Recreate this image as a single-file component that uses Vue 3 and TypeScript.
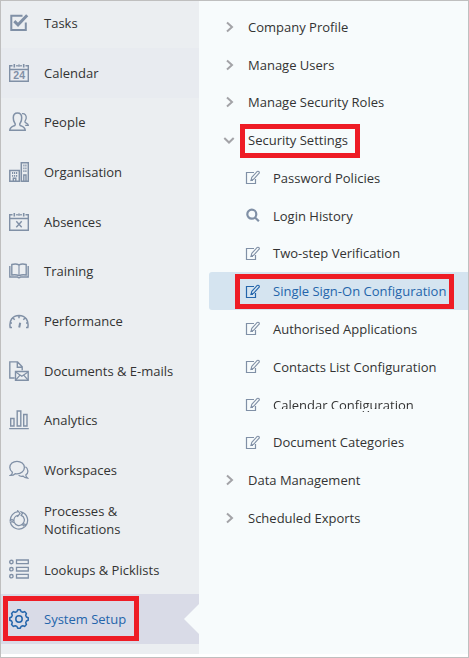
<script setup lang="ts">
type Side = { label: string; icon: string; state?: 'hover' | 'active' }
type Entry = { label: string; kind: 'closed' | 'open' | 'edit' | 'search'; mark?: boolean; active?: boolean; clipped?: boolean }

const sidebar: Side[] = [
  { label: 'Tasks', icon: 'tasks' },
  { label: 'Calendar', icon: 'calendar', state: 'hover' },
  { label: 'People', icon: 'people' },
  { label: 'Organisation', icon: 'org' },
  { label: 'Absences', icon: 'absences' },
  { label: 'Training', icon: 'training' },
  { label: 'Performance', icon: 'gauge' },
  { label: 'Documents & E-mails', icon: 'docs' },
  { label: 'Analytics', icon: 'bars' },
  { label: 'Workspaces', icon: 'chat' },
  { label: 'Processes & Notifications', icon: 'process' },
  { label: 'Lookups & Picklists', icon: 'list' },
  { label: 'System Setup', icon: 'gear', state: 'active' },
]

const entries: Entry[] = [
  { label: 'Company Profile', kind: 'closed' },
  { label: 'Manage Users', kind: 'closed' },
  { label: 'Manage Security Roles', kind: 'closed' },
  { label: 'Security Settings', kind: 'open', mark: true },
  { label: 'Password Policies', kind: 'edit' },
  { label: 'Login History', kind: 'search' },
  { label: 'Two-step Verification', kind: 'edit' },
  { label: 'Single Sign-On Configuration', kind: 'edit', active: true, mark: true },
  { label: 'Authorised Applications', kind: 'edit' },
  { label: 'Contacts List Configuration', kind: 'edit' },
  { label: 'Calendar Configuration', kind: 'edit', clipped: true },
  { label: 'Document Categories', kind: 'edit' },
  { label: 'Data Management', kind: 'closed' },
  { label: 'Scheduled Exports', kind: 'closed' },
]

const isChild = (e: Entry) => e.kind === 'edit' || e.kind === 'search'

// Cog outline with eight rounded teeth
const cog = (() => {
  const pts: string[] = []
  for (let i = 0; i < 8; i++) {
    const a = (i * Math.PI) / 4 - Math.PI / 2
    const ring: [number, number][] = [[-0.27, 7.7], [-0.14, 9.3], [0.14, 9.3], [0.27, 7.7]]
    for (const [d, r] of ring) pts.push(`${(10 + r * Math.cos(a + d)).toFixed(2)} ${(10 + r * Math.sin(a + d)).toFixed(2)}`)
  }
  return `M${pts.join('L')}Z`
})()
</script>

<template>
  <div class="frame">
    <nav class="sidebar">
      <a v-for="s in sidebar" :key="s.label" class="side" :class="[s.state, s.icon]">
        <svg class="side-icon" viewBox="0 0 20 20">
          <g v-if="s.icon === 'tasks'">
            <path d="M13.5 2.8H2.3V17H16.8V9.5" stroke-width="2" />
            <path d="M5.3 8.2L9 11.8L18.2 2.3" stroke-width="3" />
          </g>
          <g v-else-if="s.icon === 'calendar'">
            <path d="M3.5 2.7H.7V18.3H19.3V2.7H16.5M7.2 2.7H8.8M11.2 2.7H12.8M.7 6.5H19.3" />
            <path d="M5.3 1V4.5M14.7 1V4.5M10 1.5V3.7" stroke-width="1.6" />
            <text x="10.3" y="16.2">24</text>
          </g>
          <g v-else-if="s.icon === 'people'">
            <path d="M.8 18.3C.8 15.2 3 14.7 5.7 13.5C6.5 13 6.4 11.8 5.6 10.8C4.5 9.4 4.3 7.5 4.3 5.8C4.3 2.8 6 1 8.5 1S12.7 2.8 12.7 5.8C12.7 7.5 12.5 9.4 11.4 10.8C10.6 11.8 10.5 13 11.3 13.5C14 14.7 16.2 15.2 16.2 18.3Z" stroke-width="1.5" />
            <path d="M13 1.7C16.2 1.3 17.5 3.5 17.2 6.2C17 8 15.6 9 16 10.2C16.6 11.1 19.3 11.5 19.3 13.3H16.2" stroke-width="1.3" />
          </g>
          <g v-else-if="s.icon === 'org'">
            <path d="M.8 8.5H10.3V19.2H.8ZM12.3.7H19.3V19.2H12.3Z" stroke-width="1.5" />
            <path d="M3 11H8.3M3 13.8H8.3M14.3 3.5H17.6M14.3 6.3H17.6M14.3 9.1H17.6" stroke-width="1.8" stroke-dasharray="1.2 .8" />
            <path d="M4.3 19V16.3H6.8V19M14.8 19V13H17V19" />
          </g>
          <g v-else-if="s.icon === 'absences'">
            <path d="M3.5 2.7H.7V18.3H19.3V2.7H16.5M7.2 2.7H8.8M11.2 2.7H12.8M.7 6.5H19.3" />
            <path d="M5.3 1V4.5M14.7 1V4.5M10 1.5V3.7" stroke-width="1.6" />
            <path d="M7.3 9.3L12.7 15.3M12.7 9.3L7.3 15.3" stroke-width="1.4" />
          </g>
          <g v-else-if="s.icon === 'training'">
            <path d="M2.8 3.5Q7 2.2 10 3.9Q13 2.2 17.2 3.5V14Q13 13.2 10 14.6Q7 13.2 2.8 14ZM.8 5V16H8.5Q10 17.6 11.5 16H19.2V5" stroke-width="1.4" />
            <path d="M10 4V14.5" stroke-width="1.1" />
          </g>
          <g v-else-if="s.icon === 'gauge'">
            <path d="M3 16.5H1.2C-.1 10 3.3 4.4 10 4.4S20.1 10 18.8 16.5H17M10 4.7V7.3M4.2 7.2L5.7 8.7M15.8 7.2L14.3 8.7M1.2 12H3M18.8 12H17" stroke-width="1.5" />
            <path d="M10.2 16.5L11.2 11.8" stroke-width="2" />
          </g>
          <g v-else-if="s.icon === 'docs'">
            <path d="M5.5 17H.8V.9H8.6L13.2 5.7V9.2M8.3 1V6.2H13M6.5 10.5H19.2V19.2H6.5Z" />
            <path d="M6.7 11L12.8 15.2L19 11M6.7 19L11 14.2M19 19L14.7 14.2" stroke-width="1.2" />
          </g>
          <g v-else-if="s.icon === 'bars'">
            <path d="M1.7 8.5H5V16H1.7ZM8.2 1H11.8V16H8.2ZM14.7 4.5H18V16H14.7ZM.2 18.6H19.8" stroke-width="1.4" />
          </g>
          <g v-else-if="s.icon === 'chat'">
            <path d="M1.6 15.4Q3.4 14.4 3.4 12.3C1.8 11.1.8 9.5.8 7.6C.8 4 4 1.3 8 1.3S15.4 4 15.4 7.6S12 13.9 8 13.9Q7 13.9 6.2 13.7Q4.5 15.4 1.6 15.4Z" stroke-width="1.3" />
            <path d="M16.4 6.8C19.7 8.9 19.5 13.2 16.9 14.8Q16.7 16.5 18.5 18Q15.5 18 14 16.1Q11.5 16.7 9.6 15.3" stroke-width="1.3" />
          </g>
          <g v-else-if="s.icon === 'process'">
            <path d="M9 1.7A8.7 8.7 0 0 0 1.2 10.5L3 9.6L5 11A5 5 0 0 1 9 5.4M1.3 12.2A8.8 8.8 0 0 0 15.2 17.2L14.9 15.4L12.8 14.6A5 5 0 0 1 5.3 12.6L3.3 11.6ZM16.5 16A8.8 8.8 0 0 0 12.2 1.8L13.5 3.4L12.2 5.3A5 5 0 0 1 13.8 13.6L16 14.2ZM8.3.2L11 3.4L8.3 6.8" stroke-width="1.25" />
          </g>
          <g v-else-if="s.icon === 'list'">
            <circle cx="2.4" cy="3" r="1.7" /><circle cx="2.4" cy="10.2" r="1.7" /><circle cx="2.4" cy="17.2" r="1.7" />
            <path d="M7.5 1H19.3V4.7H7.5ZM7.5 8.3H19.3V12H7.5ZM7.5 15.3H19.3V19H7.5Z" stroke-width="1.3" />
          </g>
          <g v-else>
            <path :d="cog" stroke-width="1.5" stroke-linejoin="round" />
            <circle cx="10" cy="10" r="3.2" stroke-width="1.5" />
          </g>
        </svg>
        <span class="side-label">{{ s.label }}</span>
        <i v-if="s.state === 'active'" class="notch"></i>
        <i v-if="s.state === 'active'" class="mark mark-side"></i>
      </a>
    </nav>

    <main class="tree">
      <a v-for="e in entries" :key="e.label" class="entry" :class="{ child: isChild(e), active: e.active }">
        <svg v-if="e.kind === 'closed'" class="chevron" viewBox="0 0 12 12"><path d="M4 1.5L9 6L4 10.5" /></svg>
        <svg v-else-if="e.kind === 'open'" class="chevron" viewBox="0 0 12 12"><path d="M1.3 4L6 8.5L10.7 4" /></svg>
        <svg v-else-if="e.kind === 'search'" class="tool search" viewBox="0 0 15 15">
          <circle cx="6.8" cy="6.2" r="4.5" /><path d="M10 9.5L13.9 13.3" />
        </svg>
        <svg v-else class="tool" viewBox="0 0 15 15">
          <path d="M9 2.5H1.5V13.5H10.5V9" />
          <path d="M6 10.3L6.8 7.3L12.2 1.5Q13.3 .8 14.2 1.9Q14.6 2.8 13.9 3.5L8.6 9.3ZM5.3 10.5H8" stroke-width="1.1" />
        </svg>
        <span class="entry-label" :class="{ clipped: e.clipped }">{{ e.label }}<i v-if="e.mark" class="mark" :class="e.active ? 'mark-active' : 'mark-open'"></i></span>
      </a>
    </main>
  </div>
</template>

<style>
body { margin: 0; background: #fff; }
</style>

<style scoped>
.frame {
  box-sizing: border-box;
  width: 469px;
  height: 658px;
  padding-bottom: 3px;
  border: 1px solid #bfbfbf;
  display: flex;
  background: #fff;
  overflow: hidden;
  font: 13px/18px "Open Sans", "Noto Sans", sans-serif;
  color: #333;
}
.sidebar {
  width: 198px;
  flex: none;
  overflow: hidden;
  background: #ebeef1;
  display: flex;
  flex-direction: column;
}
.side {
  position: relative;
  box-sizing: border-box;
  height: 49.68px;
  flex: none;
  display: flex;
  align-items: center;
  gap: 15px;
  padding: 0 22px 0 8px;
}
.side:first-child { height: 46.9px; padding-bottom: 3px; }
.side.hover { background: #e8ebf0; }
.side.active { background: #d9dbe7; color: #2465ab; }
.side.list .side-label { padding-top: 1px; }
.side-icon {
  width: 20px;
  height: 20px;
  flex: none;
  fill: none;
  stroke: #8090a6;
  stroke-width: 1.4;
}
.side-icon text {
  fill: #8090a6;
  stroke: none;
  font: bold 10.5px "Liberation Sans", sans-serif;
  letter-spacing: .3px;
  text-anchor: middle;
}
.active .side-icon { stroke: #2465ab; }
.notch {
  position: absolute;
  right: 0;
  top: 9.5px;
  border: 15px solid transparent;
  border-left-width: 0;
  border-right-color: #f7fbfc;
}
.mark {
  position: absolute;
  box-sizing: border-box;
  border: 5px solid #ee1c25;
}
.mark-side { left: 2px; top: 2px; width: 136px; height: 45px; }
.mark-open { left: -8px; top: -7px; width: 120px; height: 34px; }
.mark-active { left: -38px; top: -8px; width: 219px; height: 35px; }
.tree {
  flex: 1;
  min-width: 0;
  padding: 7.1px 0 0 10px;
  background: #f7fbfc;
}
.entry {
  height: 37.75px;
  display: flex;
  align-items: center;
  gap: 13px;
  padding-left: 14px;
}
.entry.child { padding-left: 36px; gap: 13px; }
.entry.active {
  background: #d5e4f0;
  border-radius: 3px 0 0 3px;
  color: #2465ab;
}
.entry-label { position: relative; white-space: nowrap; }
.clipped {
  padding-top: 1px;
  mask-image: linear-gradient(#000 14px, transparent 14px, transparent 16px, #000 16px, #000 17px, transparent 17px);
}
.chevron {
  width: 12px;
  height: 12px;
  flex: none;
  fill: none;
  stroke: #a3a3a7;
  stroke-width: 2;
}
.tool {
  width: 15px;
  height: 15px;
  flex: none;
  fill: none;
  stroke: #8090a6;
  stroke-width: 1.2;
}
.search { stroke-width: 2.2; }
.active .tool { stroke: #2465ab; }
</style>
